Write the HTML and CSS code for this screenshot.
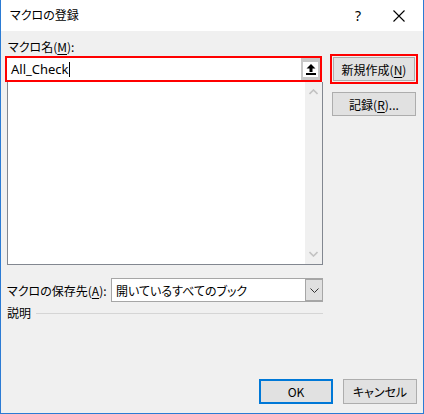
FILE: index.html
```html
<!DOCTYPE html>
<html>
<head>
    <title>マクロの登録</title>
    <link rel="stylesheet" href="styles.css">
</head>
<body>
    <div class="dialog">
        <div class="titlebar">
            <span class="title">マクロの登録</span>
            <span class="help">?</span>
            <span class="close">
                <svg width="12" height="12" viewBox="0 0 12 12"><path d="M0.5 0.5 L11.5 11.5 M11.5 0.5 L0.5 11.5" stroke="#000" stroke-width="1.1" fill="none"/></svg>
            </span>
        </div>
        <div class="content">
            <div class="top">
                <div class="left">
                    <div class="label">マクロ名(<u>M</u>):</div>
                    <div class="name-box">
                        <div class="name-input">All_Check<span class="caret"></span></div>
                        <div class="ref-btn">
                            <div class="ref-face">
                                <svg width="10" height="11" viewBox="0 0 10 11"><path d="M5 0 L9.5 4.5 L6.5 4.5 L6.5 8 L3.5 8 L3.5 4.5 L0.5 4.5 Z" fill="#000"/><rect x="0" y="9" width="10" height="2" fill="#000"/></svg>
                            </div>
                        </div>
                    </div>
                    <div class="macro-list">
                        <div class="scrollbar">
                            <svg width="9" height="6" viewBox="0 0 9 6"><path d="M0.5 5 L4.5 1 L8.5 5" stroke="#c2c2c2" stroke-width="1.6" fill="none"/></svg>
                            <svg width="9" height="6" viewBox="0 0 9 6"><path d="M0.5 1 L4.5 5 L8.5 1" stroke="#c2c2c2" stroke-width="1.6" fill="none"/></svg>
                        </div>
                    </div>
                    <div class="store-row">
                        <span class="store-label">マクロの保存先(<u>A</u>):</span>
                        <div class="select">
                            <span class="select-text">開いているすべてのブック</span>
                            <div class="drop">
                                <svg width="9" height="5" viewBox="0 0 9 5"><path d="M0.5 0.5 L4.5 4.5 L8.5 0.5" stroke="#333" stroke-width="1" fill="none"/></svg>
                            </div>
                        </div>
                    </div>
                    <div class="desc-row">
                        <span>説明</span>
                        <div class="rule"></div>
                    </div>
                </div>
                <div class="right">
                    <div class="btn-mark">
                        <button class="btn">新規作成(<u>N</u>)</button>
                    </div>
                    <button class="btn">記録(<u>R</u>)...</button>
                </div>
            </div>
            <div class="footer">
                <button class="btn ok">OK</button>
                <button class="btn">キャンセル</button>
            </div>
        </div>
    </div>
</body>
</html>
```

FILE: styles.css
```css
body {
    margin: 0;
    padding: 0;
    font-family: "Noto Sans CJK JP", "Noto Sans", sans-serif;
    font-size: 12px;
    font-feature-settings: "palt";
    color: #000;
}

u {
    text-decoration: underline;
    text-underline-offset: 2px;
}

.dialog {
    width: 424px;
    height: 414px;
    box-sizing: border-box;
    border: 1px solid #2b7bd4;
    border-top: none;
    display: flex;
    flex-direction: column;
    background-color: #f0f0f0;
}

.titlebar {
    height: 31px;
    background-color: #fff;
    display: flex;
    align-items: center;
    padding-left: 9px;
}

.title {
    flex: 1;
    line-height: 16px;
    margin-top: -1px;
}

.help {
    font-family: "Noto Sans", sans-serif;
    font-size: 14px;
    width: 38px;
    margin-top: -1px;
    text-align: left;
}

.close {
    display: flex;
    width: 30px;
    padding-top: 1px;
}

.content {
    flex: 1;
    display: flex;
    flex-direction: column;
    padding: 8px 6px 9px 4px;
}

.top {
    display: flex;
    gap: 7px;
}

.left {
    width: 318px;
}

.label {
    line-height: 16px;
    padding-left: 3px;
    margin-bottom: 1px;
}

.name-box {
    width: 317px;
    height: 26px;
    box-sizing: border-box;
    border: 2px solid #f00;
    background-color: #fff;
    display: flex;
}

.name-input {
    flex: 1;
    font-family: "Noto Sans", sans-serif;
    font-size: 13px;
    line-height: 22px;
    padding-left: 4px;
    display: flex;
    align-items: center;
}

.caret {
    display: inline-block;
    width: 1px;
    height: 15px;
    background-color: #000;
}

.ref-btn {
    width: 19px;
    background-color: #c8c8c8;
    display: flex;
    align-items: center;
    justify-content: center;
}

.ref-face {
    width: 15px;
    height: 15px;
    background-color: #fff;
    display: flex;
    align-items: center;
    justify-content: center;
}

.macro-list {
    margin-left: 2px;
    width: 316px;
    height: 183px;
    box-sizing: border-box;
    border: 1px solid #828790;
    border-top: none;
    background-color: #fff;
    display: flex;
    justify-content: flex-end;
}

.scrollbar {
    width: 17px;
    background-color: #f0f0f0;
    display: flex;
    flex-direction: column;
    justify-content: space-between;
    align-items: center;
    padding: 7px 0 7px;
}

.store-row {
    display: flex;
    align-items: center;
    margin-top: 13px;
    padding-left: 2px;
}

.store-label {
    width: 104px;
}

.select {
    flex: 1;
    height: 24px;
    box-sizing: border-box;
    border: 1px solid #a6a6a6;
    background-color: #fff;
    display: flex;
    align-items: center;
}

.select-text {
    flex: 1;
    padding-left: 4px;
}

.drop {
    width: 17px;
    height: 22px;
    box-sizing: border-box;
    border: 1px solid #a6a6a6;
    border-right: none;
    background-color: #e0e0e0;
    display: flex;
    align-items: center;
    justify-content: center;
}

.desc-row {
    display: flex;
    align-items: center;
    padding-left: 2px;
    margin-top: 3px;
    line-height: 16px;
}

.rule {
    flex: 1;
    height: 1px;
    margin-left: 5px;
    background-color: #d5d5d5;
}

.right {
    display: flex;
    flex-direction: column;
    gap: 8px;
    margin-top: 15px;
}

.btn-mark {
    width: 88px;
    height: 30px;
    box-sizing: border-box;
    border: 2px solid #f00;
    padding: 1px;
}

.btn {
    font-family: "Noto Sans CJK JP", "Noto Sans", sans-serif;
    font-size: 12px;
    font-feature-settings: "palt";
    background-color: #e1e1e1;
    border: 1px solid #adadad;
    padding: 0;
    margin: 0;
    color: #000;
    height: 24px;
    width: 84px;
    margin-left: 2px;
}

.btn-mark .btn {
    margin-left: 0;
    width: 82px;
}

.footer {
    margin-top: auto;
    display: flex;
    justify-content: flex-end;
    gap: 10px;
}

.footer .btn {
    width: 74px;
    height: 25px;
    margin-left: 0;
}

.ok {
    border: 2px solid #0078d7;
}
```
